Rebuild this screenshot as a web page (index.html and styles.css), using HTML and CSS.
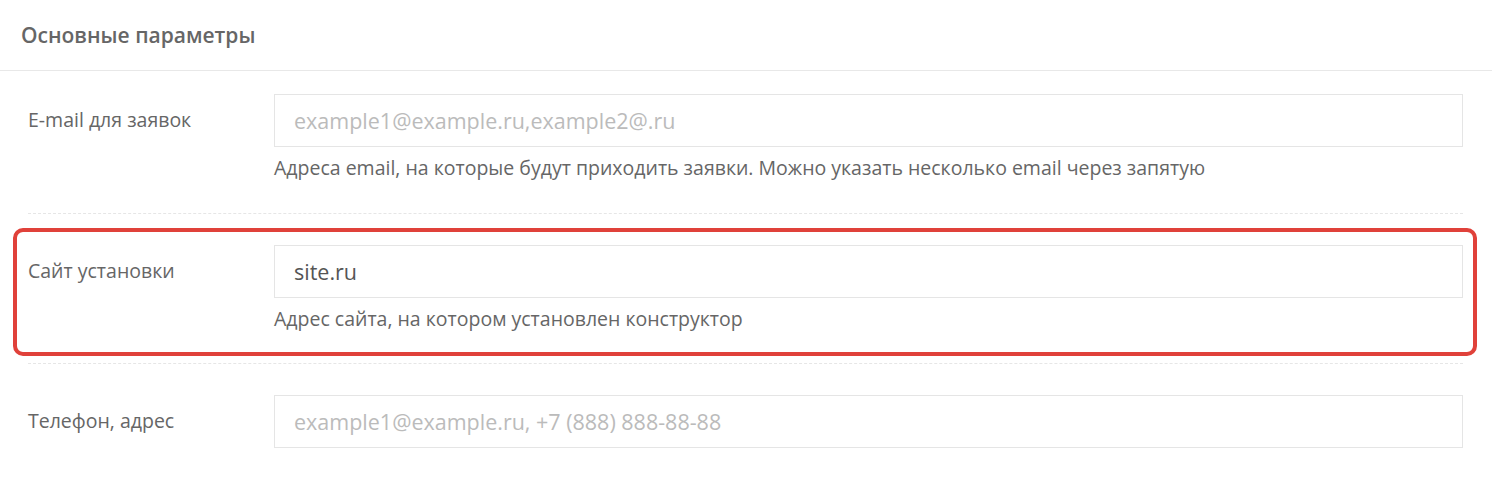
FILE: index.html
```html
<!DOCTYPE html>
<html lang="ru">
<head>
    <meta charset="UTF-8">
    <meta name="viewport" content="width=device-width, initial-scale=1.0">
    <title>Основные параметры</title>
    <link rel="stylesheet" href="styles.css">
</head>
<body>

    <div class="panel">
        <div class="panel-header">Основные параметры</div>

        <div class="panel-body">
            <div class="field-row">
                <label class="field-label">E-mail для заявок</label>
                <div class="field-control">
                    <input class="field-input" type="text" placeholder="example1@example.ru,example2@.ru">
                    <div class="field-help">Адреса email, на которые будут приходить заявки. Можно указать несколько email через запятую</div>
                </div>
            </div>

            <div class="field-row field-marked">
                <label class="field-label">Сайт установки</label>
                <div class="field-control">
                    <input class="field-input" type="text" value="site.ru">
                    <div class="field-help">Адрес сайта, на котором установлен конструктор</div>
                </div>
                <!-- red annotation frame -->
                <div class="highlight"></div>
            </div>

            <div class="field-row">
                <label class="field-label">Телефон, адрес</label>
                <div class="field-control">
                    <input class="field-input" type="text" placeholder="example1@example.ru, +7 (888) 888-88-88">
                </div>
            </div>
        </div>
    </div>

</body>
</html>
```

FILE: styles.css
```css
body {
    margin: 0;
    background-color: #fff;
    font-family: "Open Sans", Arial, sans-serif;
    color: #666;
}
.panel-header {
    height: 71px;
    line-height: 70px;
    padding-left: 21px;
    font-size: 21px;
    font-weight: 600;
    color: #666;
    border-bottom: 1px solid #e8e8e8;
    box-sizing: border-box;
}
.panel-body {
    padding: 0 29px 0 28px;
}
.field-row {
    position: relative;
    display: flex;
    align-items: flex-start;
    padding: 31px 0 31px;
    border-bottom: 1px dashed #e6e6e6;
}
.field-row:first-child {
    padding-top: 23px;
    padding-bottom: 32px;
}
.field-row:last-child {
    border-bottom: none;
}
.field-label {
    width: 246px;
    flex-shrink: 0;
    font-size: 19.5px;
    line-height: 52px;
    color: #666;
}
.field-control {
    flex: 1;
}
.field-input {
    display: block;
    width: 100%;
    height: 53px;
    box-sizing: border-box;
    padding: 0 19px;
    border: 1px solid #e5e5e5;
    background: #fff;
    font-family: inherit;
    font-size: 21.5px;
    color: #555;
    outline: none;
}
.field-input::placeholder {
    color: #bbb;
}
.field-help {
    margin-top: 8px;
    font-size: 19.5px;
    line-height: 26px;
    color: #666;
}
/* annotation frame drawn over the second row */
.highlight {
    position: absolute;
    top: 14px;
    bottom: 7px;
    left: -15px;
    right: -14px;
    border: 4px solid #e0413a;
    border-radius: 10px;
    pointer-events: none;
}
```
